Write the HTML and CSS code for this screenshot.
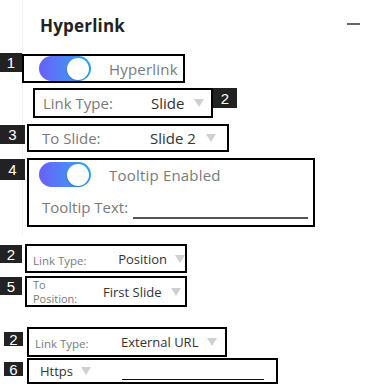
FILE: index.html
```html
<!DOCTYPE html>
<html>
<head>
<meta charset="utf-8">
<link rel="stylesheet" href="styles.css">
</head>
<body>
<div class="page">
  <section class="panel">
    <header class="title-row">
      <h1 class="title">Hyperlink</h1>
      <span class="collapse"></span>
    </header>

    <div class="row r1">
      <span class="badge b1">1</span>
      <div class="box box1">
        <span class="toggle"><span class="knob"></span></span>
        <span class="toggle-label">Hyperlink</span>
      </div>
    </div>

    <div class="row r2">
      <div class="box box2">
        <span class="label lbl-wide">Link Type:</span>
        <span class="value">Slide</span>
        <span class="caret"></span>
      </div>
      <span class="badge b2">2</span>
    </div>

    <div class="row r3">
      <span class="badge b3">3</span>
      <div class="box box3">
        <span class="label lbl-wide">To Slide:</span>
        <span class="value">Slide 2</span>
        <span class="caret"></span>
      </div>
    </div>

    <div class="row r4">
      <span class="badge b4">4</span>
      <div class="box box4">
        <div class="line">
          <span class="toggle"><span class="knob"></span></span>
          <span class="toggle-label">Tooltip Enabled</span>
        </div>
        <div class="line line-text">
          <span class="label">Tooltip Text:</span>
          <span class="underline u4"></span>
        </div>
      </div>
    </div>
  </section>

  <div class="row r5">
    <span class="badge b5">2</span>
    <div class="box box5">
      <span class="label small lbl-small">Link Type:</span>
      <span class="value small-val">Position</span>
      <span class="caret"></span>
    </div>
  </div>

  <div class="row r6">
    <span class="badge b6">5</span>
    <div class="box box6">
      <span class="label small lbl-small2">To<br>Position:</span>
      <span class="value small-val">First Slide</span>
      <span class="caret"></span>
    </div>
  </div>

  <div class="row r7">
    <span class="badge b7">2</span>
    <div class="box box7">
      <span class="label small lbl-small3">Link Type:</span>
      <span class="value small-val">External URL</span>
      <span class="caret"></span>
    </div>
  </div>

  <div class="row r8">
    <span class="badge b8">6</span>
    <div class="box box8">
      <span class="value small-val https">Https</span>
      <span class="caret"></span>
      <span class="underline u8"></span>
    </div>
  </div>
</div>
</body>
</html>
```

FILE: styles.css
```css
* { box-sizing: border-box; }
html, body { margin: 0; padding: 0; background: #fff; }
body {
  width: 382px;
  height: 386px;
  overflow: hidden;
  font-family: "Open Sans", "Liberation Sans", sans-serif;
}
.page {
  width: 382px;
  height: 386px;
  background: linear-gradient(#f0f0f0, #f0f0f0) 22px 0 / 1px 235px no-repeat;
}
.title-row {
  display: flex;
  justify-content: space-between;
  align-items: center;
  height: 47px;
  padding: 4px 22px 0 40px;
}
.title {
  margin: 0;
  font-size: 17px;
  font-weight: 700;
  color: #222;
  letter-spacing: 0.2px;
}
.collapse {
  width: 13px;
  height: 2px;
  background: #666;
  margin-top: -3px;
}
.row { display: flex; align-items: flex-start; }
.badge {
  display: flex;
  align-items: center;
  justify-content: center;
  background: #222;
  color: #fff;
  font-family: "Liberation Sans", Arial, sans-serif;
  font-size: 15px;
  line-height: 1;
  flex: none;
}
.box {
  border: 2px solid #000;
  display: flex;
  align-items: center;
  background: #fff;
  flex: none;
}
.label { color: #7a7a7a; font-size: 15px; white-space: nowrap; }
.value { color: #333; font-size: 15px; white-space: nowrap; }
.caret {
  width: 0; height: 0;
  border-left: 5px solid transparent;
  border-right: 5px solid transparent;
  border-top: 8px solid #d0d0d0;
  flex: none;
}
.toggle {
  position: relative;
  width: 52px;
  height: 25px;
  border-radius: 13px;
  background: linear-gradient(90deg, #6a5ff6 0%, #4e86f6 50%, #25aaf6 100%);
  flex: none;
}
.knob {
  position: absolute;
  right: 2px;
  top: 1.5px;
  width: 22px;
  height: 22px;
  border-radius: 50%;
  background: #fff;
  box-shadow: 0 1px 2px rgba(0,0,0,0.25);
}
.toggle-label { color: #7a7a7a; font-size: 15px; margin-left: 18px; white-space: nowrap; letter-spacing: 0.2px; }

/* row 1 */
.r1 { margin-top: 6px; }
.b1 { width: 22px; height: 19px; }
.box1 { width: 163px; height: 29px; margin-top: 1px; padding-left: 15px; }

/* row 2 */
.r2 { margin-top: 5px; margin-left: 33px; }
.box2 { width: 180px; height: 30px; padding-left: 8px; }
.b2 { width: 24px; height: 20px; }
.lbl-wide { width: 108px; }
.box2 .caret, .box3 .caret { margin-left: 10px; }

/* row 3 */
.r3 { margin-top: 6px; }
.b3 { width: 25px; height: 19px; margin-top: 1px; }
.box3 { width: 202px; height: 28px; margin-left: 2px; padding-left: 13px; }

/* row 4 */
.r4 { margin-top: 6px; }
.b4 { width: 25px; height: 21px; margin-top: 1px; }
.box4 {
  width: 288px;
  height: 69px;
  margin-left: 2px;
  flex-direction: column;
  align-items: stretch;
  padding: 2px 0 0 10px;
}
.line { display: flex; align-items: center; }
.line-text { margin-top: 8px; padding-left: 3px; height: 24px; }
.underline { display: block; height: 2px; background: #555; flex: none; }
.u4 { width: 175px; margin-left: 5px; align-self: flex-end; }

/* row 5 */
.r5 { margin-top: 17px; }
.b5 { width: 22px; height: 18px; margin-top: 1px; }
.box5 { width: 162px; height: 29px; margin-left: 3px; padding-left: 6px; }
.small { font-size: 11.5px; }
.small-val { font-size: 13px; }
.lbl-small { width: 87px; padding-top: 3px; }
.box5 .caret { margin-left: 8px; }

/* row 6 */
.r6 { margin-top: 3px; }
.b6 { width: 22px; height: 18px; margin-top: 1px; }
.box6 { width: 162px; height: 31px; margin-left: 3px; padding-left: 6px; }
.lbl-small2 { width: 70px; line-height: 14px; font-size: 11px; }
.box6 .caret { margin-left: 10px; }

/* row 7 */
.r7 { margin-top: 20px; }
.b7 { width: 19px; height: 14px; margin-left: 4px; margin-top: 5px; }
.box7 { width: 200px; height: 30px; margin-left: 4px; padding-left: 6px; }
.lbl-small3 { width: 86px; padding-top: 3px; }
.box7 .caret { margin-left: 9px; }

/* row 8 */
.r8 { margin-top: 1px; }
.b8 { width: 19px; height: 14px; margin-left: 4px; margin-top: 4px; }
.box8 { width: 251px; height: 26px; margin-left: 4px; padding-left: 11px; }
.box8 .caret { margin-left: 8px; }
.u8 { width: 142px; height: 1.5px; background: #111; margin-left: 31px; align-self: flex-end; margin-bottom: 2px; }
```
